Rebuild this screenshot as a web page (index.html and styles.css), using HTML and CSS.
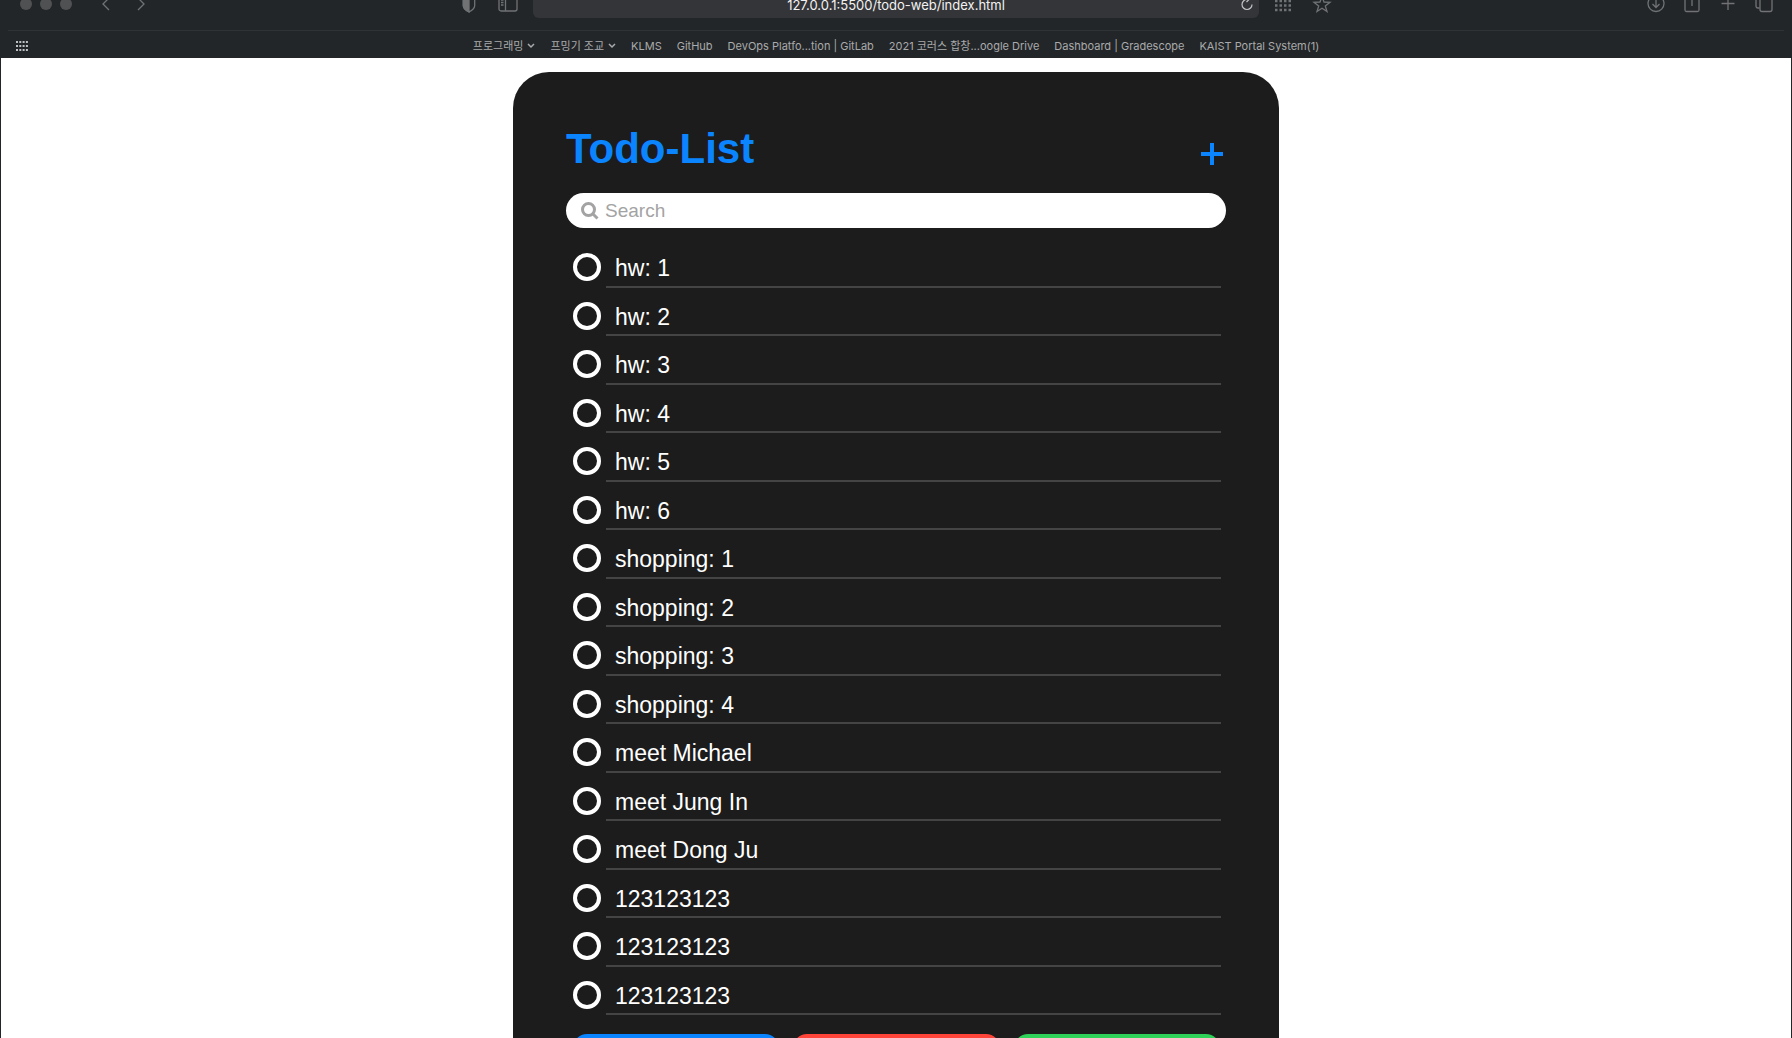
FILE: index.html
```html
<!DOCTYPE html>
<html lang="en">
<head>
<meta charset="utf-8">
<meta name="viewport" content="width=device-width, initial-scale=1">
<title>Todo-List</title>
<link rel="stylesheet" href="styles.css">
</head>
<body>
<header class="browser">
  <div class="toolbar">
    <div class="tools tools-left">
      <div class="window-controls"><span class="dot"></span><span class="dot"></span><span class="dot"></span></div>
      <div class="history">
        <button class="tool" aria-label="Back"><svg viewBox="0 0 20 20"><path d="M13 4 7 10l6 6"/></svg></button>
        <button class="tool" aria-label="Forward"><svg viewBox="0 0 20 20"><path d="M7 4l6 6-6 6"/></svg></button>
      </div>
      <div class="page-tools">
        <button class="tool" aria-label="Privacy report"><svg viewBox="0 0 20 20"><path d="M10 2.500 4.300 4.500v7c0 3 2.700 5 5.700 6.500 3-1.500 5.700-3.500 5.700-6.500v-7z"/><path class="solid" d="M10 2.500 4.300 4.500v7c0 3 2.700 5 5.700 6.500z"/></svg></button>
        <button class="tool" aria-label="Sidebar"><svg viewBox="0 0 20 20"><rect x="1" y="3" width="18" height="14" rx="2"/><path d="M7.500 3v14M3 6h2.500M3 8.500h2.500M3 11h2.500"/></svg></button>
      </div>
    </div>
    <div class="address">
      <input class="url" type="text" aria-label="Address" value="127.0.0.1:5500/todo-web/index.html">
      <button class="reload" aria-label="Reload"><svg viewBox="0 0 16 16"><path d="M9 3.500H8a5 5 0 1 0 5 5M7.500 1l2.500 2.500L7.500 6"/></svg></button>
    </div>
    <div class="tools tools-right">
      <div class="page-tools start">
        <button class="tool" aria-label="Extensions"><svg viewBox="0 0 20 20"><path class="dots" d="M2 7h16M2 11.500h16M2 16h16"/></svg></button>
        <button class="tool" aria-label="Favorite"><svg viewBox="0 0 20 20"><path d="m10 2.500 2 5.500 6 .3-4.700 3.600 1.700 5.600-5-3.200-5 3.200 1.700-5.600L2 8.300 8 8z"/></svg></button>
      </div>
      <div class="window-tools">
        <button class="tool" aria-label="Downloads"><svg viewBox="0 0 20 20"><circle cx="10" cy="9.500" r="8"/><path d="M10 5v8.500M6.500 10l3.500 3.500 3.500-3.500"/></svg></button>
        <button class="tool" aria-label="Share"><svg viewBox="0 0 20 20"><path d="M7 5H4.500Q3 5 3 6.500v9.500Q3 17.500 4.500 17.500h11Q17 17.500 17 16V6.500Q17 5 15.500 5H13M10 12V1"/></svg></button>
        <button class="tool" aria-label="New tab"><svg viewBox="0 0 20 20"><path d="M10 3v13M3.500 9.500h13"/></svg></button>
        <button class="tool" aria-label="Tab overview"><svg viewBox="0 0 20 20"><rect x="6" y="4" width="12" height="13.500" rx="2"/><path d="M5.500 14H4q-2 0-2-2V3"/></svg></button>
      </div>
    </div>
  </div>
  <nav class="bookmarks" aria-label="Bookmarks">
    <button class="grid-button" aria-label="Show bookmarks"><svg viewBox="0 0 14 12"><path d="M1 2h12M1 6h12M1 10h12"/></svg></button>
    <div class="links">
      <button class="folder"><span>프로그래밍</span><svg viewBox="0 0 8 6"><path d="m1 1 3 3 3-3"/></svg></button>
      <button class="folder"><span>프밍기 조교</span><svg viewBox="0 0 8 6"><path d="m1 1 3 3 3-3"/></svg></button>
      <a href="#">KLMS</a>
      <a href="#">GitHub</a>
      <a href="#">DevOps Platfo...tion | GitLab</a>
      <a href="#">2021 코러스 합창...oogle Drive</a>
      <a href="#">Dashboard | Gradescope</a>
      <a href="#">KAIST Portal System(1)</a>
    </div>
  </nav>
</header>
<main class="page">
  <section class="card">
    <div class="card-head">
      <h1>Todo-List</h1>
      <button class="add" aria-label="Add todo"><svg viewBox="0 0 28 28"><path d="M14 3v22M3 14h22"/></svg></button>
    </div>
    <label class="search">
      <svg viewBox="0 0 18 18"><circle cx="7.500" cy="7.500" r="6"/><path d="m12 12 4.500 4.500"/></svg>
      <input type="search" placeholder="Search" aria-label="Search">
    </label>
    <ul class="todos">
      <li><input type="checkbox" id="t1"><label for="t1">hw: 1</label></li>
      <li><input type="checkbox" id="t2"><label for="t2">hw: 2</label></li>
      <li><input type="checkbox" id="t3"><label for="t3">hw: 3</label></li>
      <li><input type="checkbox" id="t4"><label for="t4">hw: 4</label></li>
      <li><input type="checkbox" id="t5"><label for="t5">hw: 5</label></li>
      <li><input type="checkbox" id="t6"><label for="t6">hw: 6</label></li>
      <li><input type="checkbox" id="t7"><label for="t7">shopping: 1</label></li>
      <li><input type="checkbox" id="t8"><label for="t8">shopping: 2</label></li>
      <li><input type="checkbox" id="t9"><label for="t9">shopping: 3</label></li>
      <li><input type="checkbox" id="t10"><label for="t10">shopping: 4</label></li>
      <li><input type="checkbox" id="t11"><label for="t11">meet Michael</label></li>
      <li><input type="checkbox" id="t12"><label for="t12">meet Jung In</label></li>
      <li><input type="checkbox" id="t13"><label for="t13">meet Dong Ju</label></li>
      <li><input type="checkbox" id="t14"><label for="t14">123123123</label></li>
      <li><input type="checkbox" id="t15"><label for="t15">123123123</label></li>
      <li><input type="checkbox" id="t16"><label for="t16">123123123</label></li>
    </ul>
    <div class="actions">
      <button class="action blue" aria-label="All"></button>
      <button class="action red" aria-label="Remaining"></button>
      <button class="action green" aria-label="Completed"></button>
    </div>
  </section>
</main>
</body>
</html>
```
FILE: styles.css
```css
* { box-sizing: border-box; }

body {
  margin: 0;
  height: 100vh;
  overflow: hidden;
  background: #fff;
  font-family: "Liberation Sans", Arial, sans-serif;
}

button {
  padding: 0;
  border: 0;
  background: none;
  color: inherit;
  font: inherit;
}

svg {
  display: block;
  fill: none;
  stroke: currentColor;
}

/* Browser bars */
.browser {
  height: 58px;
  overflow: hidden;
  background: #232629;
  color: #a9aaab;
  font-family: Inter, "Noto Sans CJK KR", sans-serif;
}

/* The upper part of the toolbar is scrolled out of the window */
.toolbar {
  display: grid;
  grid-template-columns: 1fr minmax(0, 726px) 1fr;
  align-items: center;
  height: 52px;
  margin-top: -22px;
}

.tools {
  display: flex;
  align-items: center;
  color: #707274;
}

.tools-left { padding: 0 15px 0 20px; }
.tools-right { padding: 0 18px 0 14px; justify-content: space-between; }

.window-controls { display: flex; gap: 8px; }
.dot { width: 12px; height: 12px; border-radius: 50%; background: #505153; }
.history { display: flex; gap: 15px; margin-left: 24px; }
.page-tools { display: flex; gap: 19px; margin-left: auto; }
.page-tools.start { margin-left: 0; }
.window-tools { display: flex; gap: 16px; }
.tool { width: 20px; height: 20px; }
.tool svg { stroke-width: 1.3; }
.tool .solid { fill: currentColor; }
.tool .dots { stroke-width: 2.5; stroke-dasharray: 2.5 2; }

.address {
  display: grid;
  grid-template-columns: 20px 1fr 20px;
  align-items: center;
  height: 28px;
  border-radius: 6px;
  background: #343538;
}

.url {
  grid-column: 2;
  min-width: 0;
  padding: 2px 0 0;
  border: 0;
  background: none;
  color: #f2f2f2;
  font: 400 13px/20px Inter, sans-serif;
  text-align: center;
}

.reload { width: 16px; height: 16px; color: #c4c5c6; }
.reload svg { stroke-width: 1.2; }

.bookmarks {
  display: grid;
  grid-template-columns: 14px 1fr 14px;
  align-items: center;
  height: 28px;
  margin: 0 8px;
  padding: 2px 7px 0;
  border-top: 1px solid #303336;
}

.grid-button { width: 14px; height: 12px; color: #c0c1c2; }
.grid-button svg { stroke-width: 2; stroke-dasharray: 2 1.3; }

.links {
  display: flex;
  justify-content: center;
  gap: 15px;
  font-size: 11px;
  line-height: 16px;
  white-space: nowrap;
}

.links a { color: inherit; text-decoration: none; }
.folder { display: flex; align-items: center; gap: 4px; }
.folder svg { width: 8px; height: 6px; stroke-width: 1.5; }

/* Page */
.page {
  min-height: calc(100vh - 58px);
  padding-top: 14px;
  border: solid #232629;
  border-width: 0 1px;
}

.card {
  max-width: 766px;
  margin: 0 auto;
  padding: 53px 53px;
  border-radius: 36px;
  background: #1c1c1c;
}

.card-head {
  display: flex;
  align-items: center;
  justify-content: space-between;
  height: 48px;
  margin-bottom: 20px;
  color: #0a84ff;
}

h1 { margin: 0; font-size: 42px; line-height: 48px; }
.add { width: 28px; height: 28px; margin-top: 10px; }
.add svg { stroke-width: 4; }

.search {
  display: flex;
  align-items: center;
  gap: 6px;
  height: 35px;
  padding: 0 15px;
  border-radius: 18px;
  background: #fff;
  color: #a3a3a3;
}

.search svg { width: 18px; height: 18px; stroke-width: 3; }

.search input {
  flex: 1;
  min-width: 0;
  padding: 0;
  border: 0;
  outline: 0;
  background: none;
  font: 19px/24px "Liberation Sans", Arial, sans-serif;
}

.search input::placeholder { color: #a3a3a3; }

.todos {
  margin: 11px 5px 19px 7px;
  padding: 0;
  list-style: none;
}

.todos li { display: flex; gap: 5px; height: 49px; }
.todos li:nth-child(even) { height: 48px; }

.todos input {
  appearance: none;
  flex: none;
  width: 28px;
  height: 28px;
  margin: 14px 0 0;
  border: 4px solid #fff;
  border-radius: 50%;
}

.todos label {
  flex: 1;
  padding: 16px 0 0 9px;
  border-bottom: 2px solid #444;
  color: #fff;
  font-size: 23px;
  line-height: 26px;
}

.actions {
  display: grid;
  grid-template-columns: repeat(3, 1fr);
  gap: 14px;
  margin: 0 6px 0 7px;
}

.action { height: 48px; border-radius: 14px; }
.blue { background: #0a84ff; }
.red { background: #ff453a; }
.green { background: #30d158; }
```
